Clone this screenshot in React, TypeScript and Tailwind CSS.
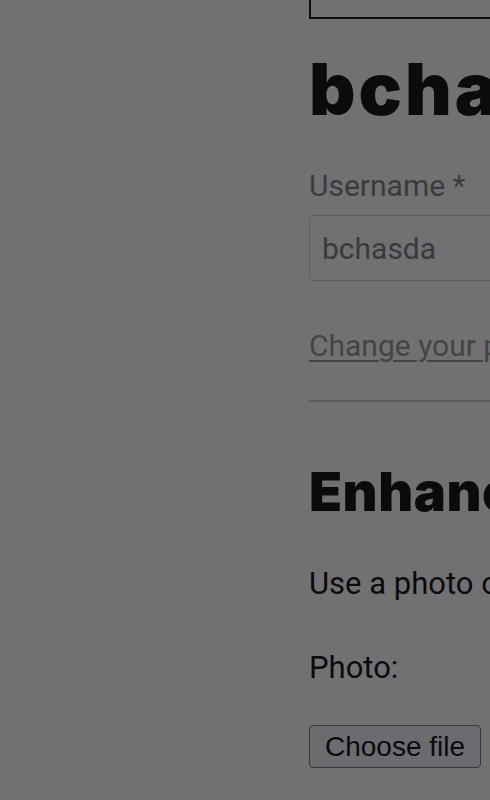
export default function App() {
  return (
    <div className="w-[490px] h-[800px] overflow-hidden bg-[#717173] font-['Roboto',sans-serif]">
      <div className="w-[760px] pl-[309px] flex flex-col items-start">
        {/* bottom edge of the card above */}
        <div className="w-[440px] h-[19px] border-2 border-t-0 border-[#0b0a0c]" />

        <h1 className="mt-[34px] text-[72px] leading-none font-black text-[#0b0a0c] tracking-[3px] whitespace-nowrap font-['Inter',sans-serif]">
          bchasda
        </h1>

        <div className="mt-[44px] flex flex-col">
          <label className="text-[30px] leading-[34px] text-[#3b3b3d]">Username *</label>
          <input
            readOnly
            value="bchasda"
            className="mt-[12px] w-[400px] h-[66px] px-[12px] rounded-[5px] border border-[#5d5d5f] bg-transparent text-[30px] text-[#3a3a3c] outline-none font-['Roboto',sans-serif]"
          />
        </div>

        <a
          href="#"
          className="mt-[48px] text-[30px] leading-[34px] text-[#444446] underline underline-offset-[4px] decoration-[2px] whitespace-nowrap"
        >
          Change your password
        </a>

        <hr className="mt-[37px] w-[440px] border-0 border-t-2 border-[#5e5c5e]" />

        <h2 className="mt-[63px] text-[54px] leading-none font-black text-[#0b0a0c] tracking-[0.5px] whitespace-nowrap font-['Inter',sans-serif]">
          Enhance your profile
        </h2>

        <p className="mt-[47px] text-[31px] leading-[36px] text-[#0b0a0c] whitespace-nowrap">
          Use a photo of yourself
        </p>

        <p className="mt-[48px] text-[31px] leading-[36px] text-[#0b0a0c]">Photo:</p>

        <button className="mt-[39px] w-[172px] h-[43px] rounded-[4px] border-[1.5px] border-[#38383a] bg-[#6c6b70] text-[28px] leading-none text-[#0b0a0c] font-['Liberation_Sans',Arial,sans-serif]">
          Choose file
        </button>
      </div>
    </div>
  )
}
